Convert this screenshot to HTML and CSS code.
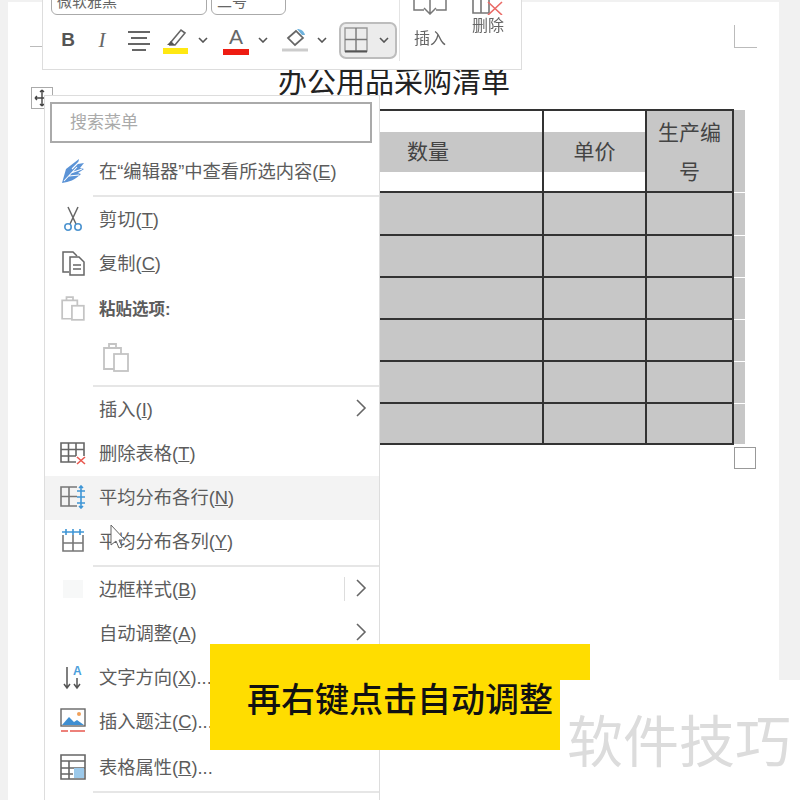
FILE: index.html
```html
<!DOCTYPE html>
<html lang="zh">
<head>
<meta charset="utf-8">
<title>办公用品采购清单</title>
<link rel="stylesheet" href="styles.css">
</head>
<body>
<div class="stage">
  <main class="sheet">
    <h1 class="doc-title">办公用品采购清单</h1>
    <table class="grid">
      <colgroup><col class="c1"><col class="c2"><col class="c3"><col class="c4"><col class="c5"></colgroup>
      <tr class="head">
        <td></td>
        <td><span class="band">数量</span></td>
        <td><span class="band">单价</span></td>
        <td class="shade wrap">生产编号</td>
        <td class="strip"></td>
      </tr>
      <tr class="r1"><td class="shade"></td><td class="shade"></td><td class="shade"></td><td class="shade"></td><td class="strip"></td></tr>
      <tr><td class="shade"></td><td class="shade"></td><td class="shade"></td><td class="shade"></td><td class="strip"></td></tr>
      <tr><td class="shade"></td><td class="shade"></td><td class="shade"></td><td class="shade"></td><td class="strip"></td></tr>
      <tr><td class="shade"></td><td class="shade"></td><td class="shade"></td><td class="shade"></td><td class="strip"></td></tr>
      <tr><td class="shade"></td><td class="shade"></td><td class="shade"></td><td class="shade"></td><td class="strip"></td></tr>
      <tr class="r6"><td class="shade"></td><td class="shade"></td><td class="shade"></td><td class="shade"></td><td class="strip"></td></tr>
    </table>
    <div class="mark mark-tr"></div>
    <div class="mark-tl"></div>
    <div class="resize-handle"></div>
    <div class="move-handle">
      <svg width="20" height="20" viewBox="0 0 20 20" fill="none" stroke="#444" stroke-width="1.4"><path d="M10 2v16M3 10h14M10 2l-2 2M10 2l2 2M10 18l-2-2M10 18l2-2M3 10l2-2M3 10l2 2M17 10l-2-2M17 10l-2 2"/></svg>
    </div>

    <div class="toolbar">
      <div class="tools">
        <div class="tool-row top">
          <div class="select font">微软雅黑</div>
          <div class="select size">二号</div>
          <span class="grow-a">A</span>
          <span class="grow-a small">A</span>
          <svg class="eraser" width="20" height="20" viewBox="0 0 20 20"><path d="M10 2l8 8-6 6-8-8z" fill="#f0a95a"/></svg>
        </div>
        <div class="tool-row bottom">
          <span class="t-b">B</span>
          <span class="t-i">I</span>
          <svg class="t-align" width="24" height="24" viewBox="0 0 24 24" stroke="#666" stroke-width="2"><path d="M1 4h22M4 10h16M1 16h22M5 22h14"/></svg>
          <svg class="t-hl" width="26" height="28" viewBox="0 0 26 28"><path d="M8 16L18 4l4 3-10 12H7z" fill="none" stroke="#666" stroke-width="1.6"/><path d="M4 19l4-4 4 4z" fill="#555"/><rect y="22" x="0" width="25" height="6" fill="#ffe812"/></svg>
          <svg class="chev" width="10" height="6" viewBox="0 0 10 6" fill="none" stroke="#555" stroke-width="1.6"><path d="M1 1l4 4 4-4"/></svg>
          <span class="t-color">A</span>
          <svg class="chev" width="10" height="6" viewBox="0 0 10 6" fill="none" stroke="#555" stroke-width="1.6"><path d="M1 1l4 4 4-4"/></svg>
          <svg class="t-fill" width="26" height="26" viewBox="0 0 26 26"><path d="M6 11l8-7 7 7-8 7z" fill="none" stroke="#666" stroke-width="1.7"/><path d="M15 2c4 0 7 2 8 6l-3 0z" fill="#6fb2dc"/><path d="M0 23h26" stroke="#ccc" stroke-width="3"/></svg>
          <svg class="chev" width="10" height="6" viewBox="0 0 10 6" fill="none" stroke="#555" stroke-width="1.6"><path d="M1 1l4 4 4-4"/></svg>
          <div class="border-btn">
            <svg width="24" height="26" viewBox="0 0 24 26" fill="none" stroke="#999" stroke-width="1.4"><path d="M1 1h22v23H1z"/><path d="M12 1v23M1 12.5h22" stroke="#777"/><path d="M1 24.5h22" stroke="#555" stroke-width="2"/></svg>
            <svg width="10" height="6" viewBox="0 0 10 6" fill="none" stroke="#555" stroke-width="1.6"><path d="M1 1l4 4 4-4"/></svg>
          </div>
        </div>
      </div>
      <div class="big-btn insert">
        <svg width="36" height="36" viewBox="0 0 36 36" fill="none" stroke="#777" stroke-width="1.5"><path d="M2 19h32v13H24M12 32H2V19M18 20v16M12 30l6 6 6-6" transform="translate(0 -1)"/></svg>
        <span class="big-label">插入</span>
      </div>
      <div class="big-btn remove">
        <svg width="34" height="36" viewBox="0 0 34 36" fill="none" stroke-width="1.6"><path d="M2 20h16v14H2zM10 20v14" stroke="#777"/><path d="M17 23l14 13M31 23L17 36" stroke="#ea6a66"/></svg>
        <span class="big-label">删除</span>
      </div>
    </div>

    <nav class="menu">
      <div class="search">搜索菜单</div>
      <div class="item">
        <span class="ico"><svg width="24" height="26" viewBox="0 0 24 26"><path d="M1 25L5 11 18 1l-1 5 6-1-4 5 4 1-6 4 3 1C14 22 8 24 1 25z" fill="#5b93d6"/><path d="M3 23L16 9M10 15l11-4M8 18l10-1M11 11l7-7" stroke="#fff" stroke-width="1.1" fill="none"/></svg></span>
        <span class="lbl">在“编辑器”中查看所选内容(<u>E</u>)</span>
      </div>
      <div class="sep"></div>
      <div class="item">
        <span class="ico"><svg width="20" height="26" viewBox="0 0 20 26" fill="none"><path d="M5 1l8 17M15 1L7 18" stroke="#666" stroke-width="1.5"/><circle cx="5" cy="21" r="3.2" stroke="#4d94d0" stroke-width="1.6"/><circle cx="15" cy="21" r="3.2" stroke="#4d94d0" stroke-width="1.6"/></svg></span>
        <span class="lbl">剪切(<u>T</u>)</span>
      </div>
      <div class="item">
        <span class="ico"><svg width="24" height="26" viewBox="0 0 24 26" fill="none" stroke="#666" stroke-width="1.5"><path d="M8 22H2V2h10l4 4"/><path d="M9 7h9l5 5v13H9zM12 15h8M12 19h8"/></svg></span>
        <span class="lbl">复制(<u>C</u>)</span>
      </div>
      <div class="item paste-head">
        <span class="ico"><svg width="24" height="26" viewBox="0 0 22 24" fill="none" stroke="#c4c4c4" stroke-width="1.6"><path d="M10 21H1V4h14v5M5 4V1h6v3"/><rect x="10" y="9" width="11" height="13"/></svg></span>
        <span class="lbl strong">粘贴选项:</span>
      </div>
      <div class="item paste-opts">
        <svg width="28" height="30" viewBox="0 0 28 30" fill="none" stroke="#c4c4c4" stroke-width="1.8"><path d="M12 26H2V5h17v6M7 5V1h7v4"/><rect x="12" y="11" width="14" height="17"/></svg>
      </div>
      <div class="sep"></div>
      <div class="item">
        <span class="ico"></span>
        <span class="lbl">插入(<u>I</u>)</span>
        <svg class="arrow" width="11" height="18" viewBox="0 0 11 18" fill="none" stroke="#666" stroke-width="1.6"><path d="M1 1l8 8-8 8"/></svg>
      </div>
      <div class="item">
        <span class="ico"><svg width="26" height="24" viewBox="0 0 26 24" fill="none" stroke="#666" stroke-width="1.6"><path d="M16 21H1V2h23v13M1 8.5h23M1 15h15M8.5 2v19M16 2v13"/><path d="M17 16l8 7M25 16l-8 7" stroke="#e8584f"/></svg></span>
        <span class="lbl">删除表格(<u>T</u>)</span>
      </div>
      <div class="item hover">
        <span class="ico"><svg width="26" height="24" viewBox="0 0 26 24" fill="none" stroke="#777" stroke-width="1.6"><path d="M17 2H1v19h16M9 2v19M1 11.5h16"/><path d="M21 1v22M17 6h8M17 12h8M17 18h8M19 3l2-2 2 2M19 21l2 2 2-2" stroke="#3f96d6"/></svg></span>
        <span class="lbl">平均分布各行(<u>N</u>)</span>
      </div>
      <div class="item">
        <span class="ico"><svg width="24" height="24" viewBox="0 0 24 24" fill="none" stroke="#777" stroke-width="1.6"><path d="M2 6v16h20V6M2 14h20M12 6v16"/><path d="M1 3h22M5 0v6M12 0v6M19 0v6" stroke="#3f96d6"/></svg></span>
        <span class="lbl">平均分布各列(<u>Y</u>)</span>
      </div>
      <div class="sep"></div>
      <div class="item">
        <span class="ico"><span class="faint"></span></span>
        <span class="lbl">边框样式(<u>B</u>)</span>
        <span class="vline"></span>
        <svg class="arrow" width="11" height="18" viewBox="0 0 11 18" fill="none" stroke="#666" stroke-width="1.6"><path d="M1 1l8 8-8 8"/></svg>
      </div>
      <div class="item">
        <span class="ico"></span>
        <span class="lbl">自动调整(<u>A</u>)</span>
        <svg class="arrow" width="11" height="18" viewBox="0 0 11 18" fill="none" stroke="#666" stroke-width="1.6"><path d="M1 1l8 8-8 8"/></svg>
      </div>
      <div class="item">
        <span class="ico"><svg width="22" height="26" viewBox="0 0 22 26" fill="none" stroke="#555" stroke-width="1.5"><path d="M5 3v21M2 20l3 4 3-4M15 14v10M12 20l3 4 3-4"/><text x="11" y="11" class="ico-a">A</text></svg></span>
        <span class="lbl">文字方向(<u>X</u>)...</span>
      </div>
      <div class="item">
        <span class="ico"><svg width="26" height="26" viewBox="0 0 26 26" fill="none"><rect x="1" y="1" width="24" height="17" stroke="#666" stroke-width="1.4"/><path d="M2 17l7-8 5 5 3-2 7 5z" fill="#3f8fd2"/><circle cx="19" cy="6" r="2" fill="#f0a05a"/><path d="M1 23h7M10 23h15" stroke="#e8584f" stroke-width="1.6"/></svg></span>
        <span class="lbl">插入题注(<u>C</u>)...</span>
      </div>
      <div class="item last">
        <span class="ico"><svg width="26" height="26" viewBox="0 0 26 26" fill="none" stroke="#666" stroke-width="1.6"><path d="M1 1h24v24H1zM1 7h24M1 14h24M1 20h12M9 7v18"/><rect x="14" y="14" width="10" height="10" fill="#9cc9ea" stroke="none"/></svg></span>
        <span class="lbl">表格属性(<u>R</u>)...</span>
      </div>
      <div class="sep"></div>
    </nav>

    <svg class="pointer" width="16" height="26" viewBox="0 0 16 26"><path d="M1 1v20l5-4 3 7 3-1-3-7h6z" fill="#fff" stroke="#666" stroke-width="1"/></svg>
  </main>

  <div class="caption">再右键点击自动调整</div>
  <div class="watermark">软件技巧</div>
</div>
</body>
</html>
```

FILE: styles.css
```css
* { box-sizing: border-box; }
html, body { margin: 0; padding: 0; }
body {
  background: #f1f1f1;
  font-family: "Liberation Sans", "Noto Sans CJK SC", sans-serif;
  color: #555;
}
.stage {
  position: relative;
  width: 800px;
  height: 800px;
  overflow: hidden;
  padding: 2px 21px 0 8px;
}
.sheet {
  position: relative;
  height: 798px;
  background: #fff;
  padding-top: 64px;
  filter: blur(0.7px);
}
.doc-title {
  margin: 0;
  padding-left: 1px;
  font-size: 29px;
  line-height: 34px;
  font-weight: 400;
  color: #222;
  text-align: center;
}
.grid {
  margin: 9px 0 0 46px;
  border-collapse: collapse;
  table-layout: fixed;
  width: 690px;
  font-size: 21px;
  color: #444;
}
.c1 { width: 258px; }
.c2 { width: 230px; }
.c3 { width: 103px; }
.c4 { width: 87px; }
.c5 { width: 12px; }
.grid td {
  border: 2px solid #333;
  padding: 0;
  text-align: center;
  height: 42px;
}
.grid .head td { height: 82px; padding-top: 2px; }
.grid .r1 td { height: 43px; }
.grid .r6 td { height: 41px; }
.grid td.shade { background: #c7c7c7; line-height: 40px; }
.grid td.wrap { padding: 2px 10px 0; line-height: 39px; }
.grid td.strip {
  background: #c7c7c7;
  border: 0;
  border-left: 2px solid #333;
  border-bottom: 1px solid #fff;
}
.band {
  display: block;
  background: #c7c7c7;
  line-height: 40px;
}
.mark-tr {
  position: absolute;
  left: 726px;
  top: 23px;
  width: 23px;
  height: 23px;
  border-left: 1px solid #bbb;
  border-bottom: 1px solid #bbb;
}
.mark-tl {
  position: absolute;
  left: 22px;
  top: 44px;
  width: 12px;
  border-top: 1px solid #bbb;
}
.resize-handle {
  position: absolute;
  left: 726px;
  top: 445px;
  width: 22px;
  height: 22px;
  border: 1px solid #999;
  background: #fff;
}
.move-handle {
  position: absolute;
  left: 23px;
  top: 85px;
  width: 22px;
  height: 22px;
  border: 1px solid #aaa;
  background: #fff;
}

/* floating toolbar */
.toolbar {
  position: absolute;
  left: 34px;
  top: -24px;
  width: 480px;
  height: 92px;
  background: #fff;
  border: 1px solid #ddd;
  display: flex;
}
.tools {
  width: 357px;
  border-right: 1px solid #e4e4e4;
  margin-bottom: 8px;
  padding-left: 8px;
}
.tool-row { display: flex; align-items: center; }
.tool-row.top { height: 36px; gap: 4px; }
.select {
  height: 36px;
  border: 1px solid #aaa;
  border-radius: 6px;
  font-size: 15px;
  line-height: 44px;
  padding-left: 5px;
  color: #666;
}
.select.font { width: 156px; }
.select.size { width: 75px; }
.grow-a { font-size: 20px; margin-left: 12px; color: #666; align-self: flex-end; margin-bottom: 11px; }
.grow-a.small { margin-left: 18px; }
.eraser { margin-left: 18px; align-self: flex-end; margin-bottom: 14px; }
.tool-row.bottom { height: 38px; margin-top: 6px; }
.t-b { font-size: 19px; font-weight: 700; width: 20px; margin-left: 7px; text-align: center; color: #555; }
.t-i { font: italic 21px "Liberation Serif", serif; width: 16px; margin-left: 16px; text-align: center; color: #666; }
.t-align { margin-left: 17px; }
.t-hl { margin-left: 12px; }
.chev { margin-left: 9px; }
.t-color {
  width: 26px;
  margin-left: 15px;
  text-align: center;
  font-size: 21px;
  line-height: 24px;
  color: #666;
  border-bottom: 6px solid #ee1c12;
}
.t-fill { margin-left: 14px; }
.border-btn {
  width: 58px;
  height: 37px;
  margin-left: 12px;
  background: #ececec;
  border: 2px solid #bdbdbd;
  border-radius: 7px;
  display: flex;
  align-items: center;
  gap: 11px;
  padding-left: 3px;
}
.big-btn {
  display: flex;
  flex-direction: column;
  align-items: center;
  width: 58px;
}
.big-label { font-size: 16px; color: #666; line-height: 22px; }
.insert { padding-left: 2px; }
.insert svg { margin-bottom: 13px; }
.remove { padding-left: 2px; }
.remove svg { margin-bottom: 0; }

/* context menu */
.menu {
  position: absolute;
  left: 36px;
  top: 93px;
  width: 336px;
  height: 720px;
  background: #fff;
  border: 1px solid #ddd;
  padding-top: 6px;
}
.search {
  width: 322px;
  height: 41px;
  margin: 0 0 7px 5px;
  border: 2px solid #aaa;
  padding-left: 18px;
  font-size: 17px;
  line-height: 37px;
  color: #aaa;
}
.item {
  display: flex;
  align-items: center;
  height: 44px;
  padding-bottom: 2px;
  font-size: 18.3px;
  color: #5c5c5c;
}
.lbl { padding-bottom: 2px; }
.item.hover { background: #f3f3f3; }
.item.paste-head { margin-top: 2px; }
.item.paste-opts { height: 52px; padding-left: 57px; padding-bottom: 0; }
.item.last { margin-top: 2px; }
.ico {
  width: 54px;
  padding-left: 2px;
  flex: none;
  display: flex;
  justify-content: center;
  align-items: center;
}
.strong { font-weight: 700; font-size: 16.5px; }
.sep {
  height: 2px;
  margin: 1px 0 1px 48px;
  background: #e6e6e6;
}
.arrow { margin-left: auto; margin-right: 12px; margin-bottom: 2px; }
.vline {
  width: 1px;
  height: 24px;
  background: #ddd;
  margin-left: auto;
}
.vline + .arrow { margin-left: 11px; }
.faint { width: 20px; height: 18px; background: #f7f8f8; }
.ico-a { font-size: 12px; font-weight: 700; fill: #4d9fdc; stroke: none; }
.pointer { position: absolute; left: 102px; top: 522px; }

/* video overlay */
.caption {
  position: absolute;
  left: 210px;
  top: 644px;
  width: 380px;
  height: 106px;
  background: #ffdd00;
  color: #111;
  font-size: 34px;
  font-weight: 500;
  line-height: 40px;
  padding: 34px 0 0 37px;
  font-family: "Noto Sans CJK SC", sans-serif;
}
.watermark {
  position: absolute;
  left: 560px;
  top: 680px;
  width: 240px;
  height: 120px;
  background: #fff;
  color: #dcdcdc;
  font-size: 56px;
  line-height: 60px;
  padding: 28px 0 0 7px;
  font-family: "Noto Sans CJK SC", sans-serif;
  white-space: nowrap;
}
```
